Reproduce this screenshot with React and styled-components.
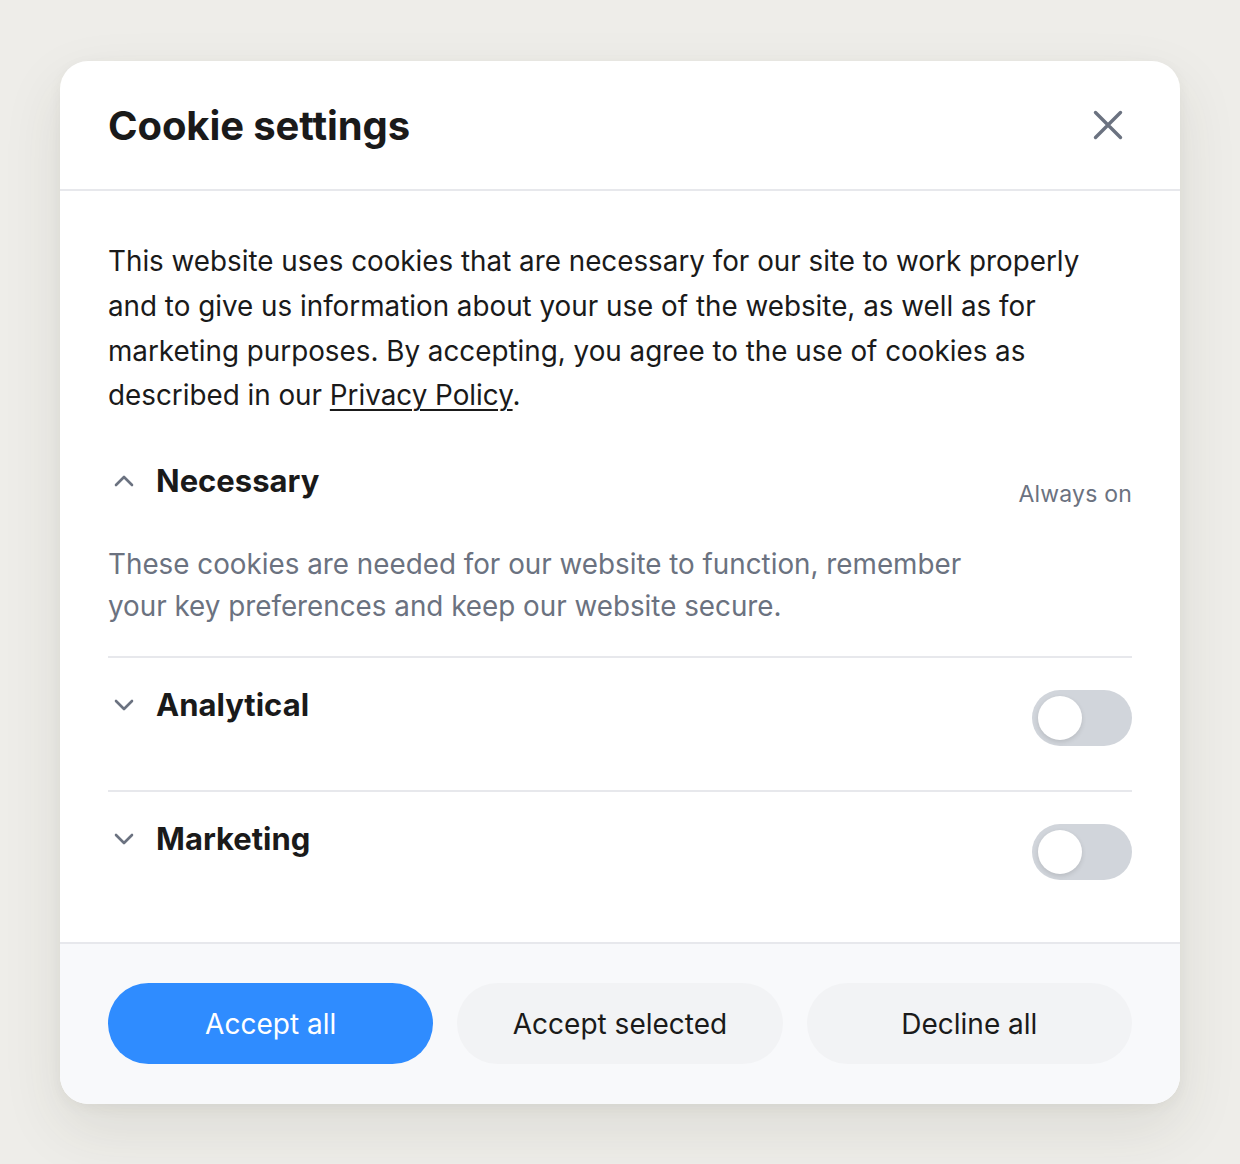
import React, { useState } from 'react';
import styled, { createGlobalStyle } from 'styled-components';

const GlobalStyle = createGlobalStyle`
  html, body {
    margin: 0;
    padding: 0;
    background: #eeede9;
  }
  body {
    font-family: Inter, "Noto Sans", "Liberation Sans", sans-serif;
    color: #1a1a1a;
    -webkit-font-smoothing: antialiased;
  }
`;

const Page = styled.div`
  padding: 61px 60px 60px;
  min-height: 1164px;
  box-sizing: border-box;
`;

const Card = styled.div`
  background: #ffffff;
  border-radius: 28px;
  overflow: hidden;
  box-shadow: 0 24px 60px rgba(60, 55, 40, 0.1), 0 4px 14px rgba(60, 55, 40, 0.05);
`;

const Header = styled.div`
  display: flex;
  align-items: center;
  justify-content: space-between;
  height: 128px;
  padding: 0 48px;
  border-bottom: 2px solid #e7e8ec;
`;

const Title = styled.h1`
  margin: 0;
  font-size: 40px;
  font-weight: 700;
  letter-spacing: -0.1px;
  color: #1a1a1a;
`;

const CloseButton = styled.button`
  display: flex;
  align-items: center;
  justify-content: center;
  width: 30px;
  height: 30px;
  margin-right: 9px;
  padding: 0;
  border: 0;
  background: none;
  cursor: pointer;
  color: #6b7280;
`;

const Body = styled.div`
  padding: 48px 48px 18px;
`;

const Intro = styled.p`
  margin: 0;
  font-size: 27.8px;
  line-height: 44.8px;
  color: #1a1a1a;

  a {
    color: inherit;
    text-decoration: underline;
    text-underline-offset: 4px;
    text-decoration-thickness: 2px;
  }
`;

const Section = styled.div`
  padding: ${p => (p.$first ? '48px' : '32px')} 0 ${p => (p.$open ? '29px' : '44px')};
  border-top: ${p => (p.$first ? 'none' : '2px solid #e7e8ec')};
`;

const Row = styled.div`
  display: flex;
  align-items: flex-start;
  justify-content: space-between;
`;

const Toggle = styled.button`
  display: flex;
  align-items: center;
  gap: 18px;
  padding: 0;
  border: 0;
  background: none;
  cursor: pointer;
  font-family: inherit;
  color: #6b7280;
`;

const Chevron = styled.span`
  display: flex;
  width: 28px;
  justify-content: center;
  margin-left: 2px;
`;

const SectionTitle = styled.span`
  font-size: 31px;
  line-height: 30px;
  font-weight: 700;
  color: #1a1a1a;
`;

const Right = styled.div`
  height: 56px;
  display: flex;
  align-items: center;
`;

const Always = styled.span`
  font-size: 23px;
  color: #6b7280;
  letter-spacing: 0.2px;
`;

const Description = styled.p`
  margin: 21px 0 0;
  max-width: 880px;
  font-size: 27.8px;
  line-height: 42px;
  color: #6b7280;
`;

const Switch = styled.button`
  position: relative;
  width: 100px;
  height: 56px;
  padding: 0;
  border: 0;
  border-radius: 28px;
  background: ${p => (p.$on ? '#2f8cff' : '#d1d5db')};
  cursor: pointer;
  transition: background 0.2s;
`;

const Knob = styled.span`
  position: absolute;
  top: 6px;
  left: ${p => (p.$on ? '50px' : '6px')};
  width: 44px;
  height: 44px;
  border-radius: 50%;
  background: #ffffff;
  box-shadow: 0 2px 5px rgba(0, 0, 0, 0.12);
  transition: left 0.2s;
`;

const Footer = styled.div`
  display: grid;
  grid-template-columns: repeat(3, 1fr);
  gap: 24px;
  padding: 39px 48px 40px;
  background: #f8f9fb;
  border-top: 2px solid #e7e8ec;
`;

const Button = styled.button`
  height: 81px;
  border: 0;
  border-radius: 41px;
  font-family: inherit;
  font-size: 28px;
  font-weight: 400;
  cursor: pointer;
  background: ${p => (p.$primary ? '#2f8cff' : '#f2f3f5')};
  color: ${p => (p.$primary ? '#ffffff' : '#1a1a1a')};
`;

const ChevronIcon = ({ up }) => (
  <svg width="22" height="14" viewBox="0 0 22 14" fill="none">
    <path
      d={up ? 'M3 11 L11 3 L19 11' : 'M3 3 L11 11 L19 3'}
      stroke="currentColor"
      strokeWidth="2.6"
      strokeLinecap="round"
      strokeLinejoin="round"
    />
  </svg>
);

const CloseIcon = () => (
  <svg width="30" height="30" viewBox="0 0 30 30" fill="none">
    <path d="M2.5 2.5 L27.5 27.5 M27.5 2.5 L2.5 27.5" stroke="currentColor" strokeWidth="3.4" strokeLinecap="round" />
  </svg>
);

const categories = [
  {
    id: 'necessary',
    title: 'Necessary',
    locked: true,
    text: 'These cookies are needed for our website to function, remember your key preferences and keep our website secure.',
  },
  { id: 'analytical', title: 'Analytical' },
  { id: 'marketing', title: 'Marketing' },
];

export default function App() {
  const [open, setOpen] = useState({ necessary: true });
  const [enabled, setEnabled] = useState({ analytical: false, marketing: false });

  return (
    <Page>
      <GlobalStyle />
      <Card>
        <Header>
          <Title>Cookie settings</Title>
          <CloseButton aria-label="Close">
            <CloseIcon />
          </CloseButton>
        </Header>
        <Body>
          <Intro>
            This website uses cookies that are necessary for our site to work properly and to give us
            information about your use of the website, as well as for marketing purposes. By accepting,
            you agree to the use of cookies as described in our <a href="#">Privacy Policy</a>.
          </Intro>
          {categories.map((c, i) => {
            const isOpen = !!open[c.id] && !!c.text;
            return (
              <Section key={c.id} $first={i === 0} $open={isOpen}>
                <Row>
                  <Toggle onClick={() => setOpen({ ...open, [c.id]: !open[c.id] })}>
                    <Chevron>
                      <ChevronIcon up={!!open[c.id]} />
                    </Chevron>
                    <SectionTitle>{c.title}</SectionTitle>
                  </Toggle>
                  <Right>
                    {c.locked ? (
                      <Always>Always on</Always>
                    ) : (
                      <Switch
                        $on={enabled[c.id]}
                        onClick={() => setEnabled({ ...enabled, [c.id]: !enabled[c.id] })}
                      >
                        <Knob $on={enabled[c.id]} />
                      </Switch>
                    )}
                  </Right>
                </Row>
                {isOpen && <Description>{c.text}</Description>}
              </Section>
            );
          })}
        </Body>
        <Footer>
          <Button $primary>Accept all</Button>
          <Button>Accept selected</Button>
          <Button>Decline all</Button>
        </Footer>
      </Card>
    </Page>
  );
}
